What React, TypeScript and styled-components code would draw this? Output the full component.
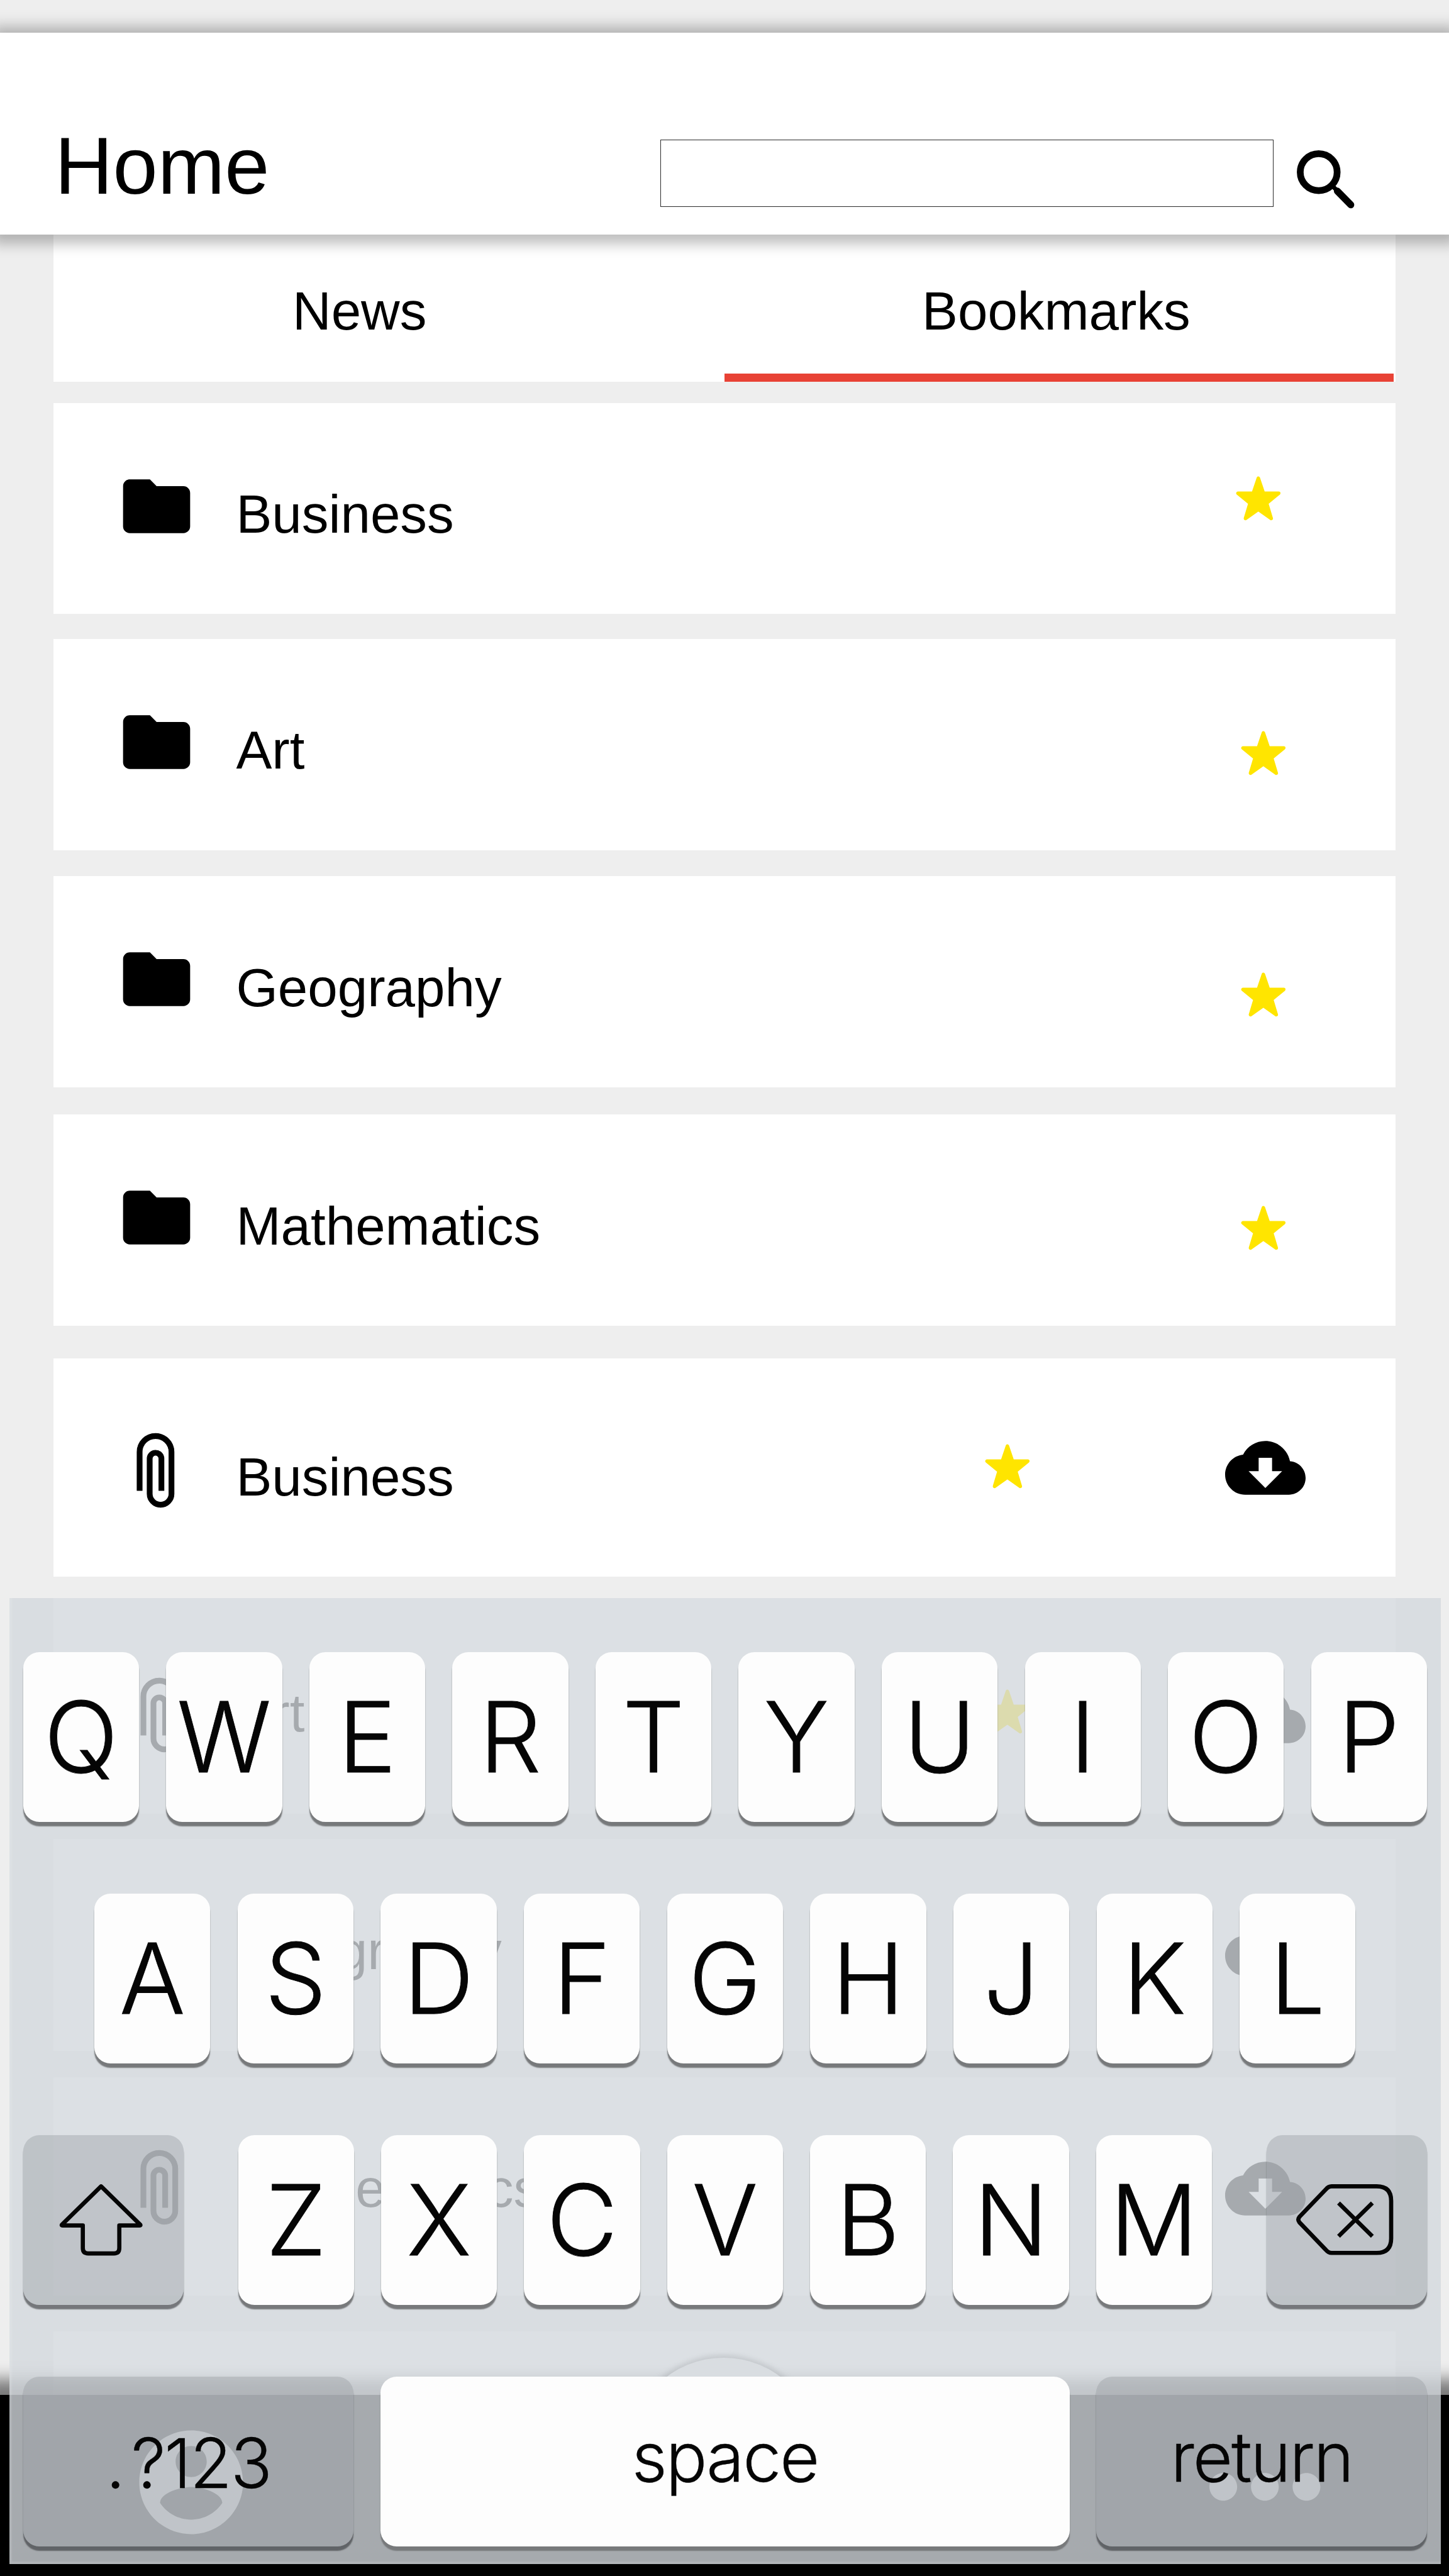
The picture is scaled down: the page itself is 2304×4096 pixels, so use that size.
import React from "react";
import styled, { createGlobalStyle } from "styled-components";

const u = (n: number) => `${Math.round((n * 2304 * 100) / 2700) / 100}px`;

const Global = createGlobalStyle`
  html, body { margin: 0; padding: 0; }
  body { background: #eee; overflow: hidden; font-family: "Liberation Sans", Arial, sans-serif; color: #000; }
`;

const Screen = styled.div`
  position: relative;
  width: ${u(2700)};
  height: ${u(4800)};
  overflow: hidden;
  background: #eee;
  display: flex;
  flex-direction: column;
`;

const Header = styled.header`
  flex: none;
  z-index: 1;
  box-sizing: border-box;
  height: ${u(376)};
  margin-top: ${u(61)};
  padding: ${u(199)} ${u(153)} 0 ${u(102)};
  display: flex;
  align-items: flex-start;
  background: #fff;
  box-shadow: 0 ${u(3)} ${u(24)} ${u(15)} rgba(0, 0, 0, 0.26);
`;

const Title = styled.h1`
  margin: ${u(-36)} auto 0 0;
  font-size: ${u(150)};
  line-height: ${u(172)};
  font-weight: 400;
`;

const SearchBox = styled.input`
  box-sizing: border-box;
  width: ${u(1143)};
  height: ${u(125.4)};
  padding: 0 ${u(20)};
  border: 1px solid #2b2b2b;
  border-radius: 0;
  background: #fff;
  outline: none;
  font: inherit;
`;

const Glyph = styled.svg<{ $size: number; $color?: string }>`
  display: block;
  flex: none;
  width: ${(p) => u(p.$size)};
  height: ${(p) => u(p.$size)};
  fill: ${(p) => p.$color ?? "#000"};
  overflow: visible;
`;

const SearchSlot = styled.div`
  margin: 0 0 0 ${u(24)};
`;

const Tabs = styled.nav`
  flex: none;
  display: grid;
  grid-template-columns: 1fr 1fr;
  height: ${u(274)};
  margin: 0 ${u(100)} ${u(40)};
  background: #fff;
`;

const Tab = styled.div<{ $active?: boolean; $inset: number }>`
  box-sizing: border-box;
  padding: ${u(86)} 0 0 ${(p) => u(p.$inset)};
  margin-right: ${(p) => (p.$active ? u(3) : 0)};
  font-size: ${u(100)};
  line-height: ${u(114)};
  border-bottom: ${u(16.4)} solid ${(p) => (p.$active ? "#e84235" : "transparent")};
`;

const List = styled.main`
  display: flex;
  flex-direction: column;
  margin: 0 ${u(100)};
`;

const Card = styled.article<{ $h: number; $gap: number }>`
  flex: none;
  box-sizing: border-box;
  display: flex;
  align-items: flex-start;
  height: ${(p) => u(p.$h)};
  margin-bottom: ${(p) => u(p.$gap)};
  background: #fff;
`;

const Slot = styled.div<{ $w: number; $left: number; $top: number }>`
  flex: none;
  width: ${(p) => u(p.$w)};
  padding-top: ${(p) => u(p.$top)};
  margin-left: ${(p) => u(p.$left)};
`;

const Label = styled.div<{ $top: number; $left: number }>`
  flex: 1;
  margin-left: ${(p) => u(p.$left)};
  padding-top: ${(p) => u(p.$top)};
  font-size: ${u(100)};
  line-height: ${u(114)};
`;

const NavBar = styled.footer`
  position: absolute;
  left: 0;
  right: 0;
  bottom: 0;
  height: ${u(338)};
  background: #000;
  box-shadow: 0 0 ${u(28)} ${u(29)} rgba(0, 0, 0, 0.49);
  display: flex;
  align-items: flex-start;
`;

const NavItem = styled.div<{ $left: number; $top: number }>`
  flex: none;
  margin: ${(p) => u(p.$top)} 0 0 ${(p) => u(p.$left)};
`;

const HomeButton = styled.div`
  width: ${u(350)};
  height: ${u(350)};
  border-radius: 50%;
  background: #eee;
  box-shadow: 0 0 ${u(10)} ${u(5)} rgba(0, 0, 0, 0.45);
`;

const Keyboard = styled.section`
  position: absolute;
  z-index: 2;
  box-sizing: border-box;
  left: ${u(18)};
  top: ${u(2978)};
  width: ${u(2667)};
  height: ${u(1800)};
  padding: ${u(100)} ${u(26)} 0 ${u(25)};
  display: flex;
  flex-direction: column;
  gap: ${u(134)};
  background: rgba(211, 216, 221, 0.79);
  box-shadow: inset 4px -4px 2px rgba(255, 255, 255, 0.12);
`;

const KeyRow = styled.div<{ $inset?: number }>`
  display: flex;
  justify-content: space-between;
  height: ${u(316)};
  padding: 0 ${(p) => u(p.$inset ?? 0)};
`;

const KeyGroup = styled.div`
  display: flex;
  gap: ${u(50.5)};
`;

const Key = styled.button<{ $w?: number; $dark?: boolean; $word?: number; $down?: number; $up?: number }>`
  flex: none;
  box-sizing: border-box;
  width: ${(p) => u(p.$w ?? 216)};
  height: ${u(316.5)};
  margin: 0;
  padding: ${(p) => u(p.$down ?? 0)} 0 ${(p) => u(p.$up ?? 0)};
  border: 0;
  border-radius: ${u(30)};
  display: flex;
  align-items: center;
  justify-content: center;
  background: ${(p) => (p.$dark ? "rgba(155, 160, 165, 0.43)" : "#fdfdfd")};
  box-shadow: 0 ${u(8)} ${u(2)} ${(p) => (p.$dark ? "rgba(50, 52, 55, 0.6)" : "#77797b")};
  color: #050505;
  font-family: Inter, Roboto, sans-serif;
  font-weight: 300;
  font-size: ${(p) => u(p.$word ?? 182)};
  line-height: 1;
  letter-spacing: ${(p) => (p.$word ? "-0.02em" : "0")};
  -webkit-text-stroke: ${(p) => (p.$word ? "0.4px" : "0.9px")} #050505;
`;

const Dot = styled.span`
  margin-right: ${u(14)};
`;

const LineIcon = styled.svg<{ $w: number; $h: number }>`
  display: block;
  margin-right: ${u(8)};
  width: ${(p) => u(p.$w)};
  height: ${(p) => u(p.$h)};
  fill: none;
  stroke: #050505;
  stroke-width: 7.8;
  stroke-linejoin: round;
  overflow: visible;
`;

const Folder = () => (
  <Glyph $size={150} viewBox="0 0 24 24">
    <path d="M10 4H4c-1.1 0-1.99.9-1.99 2L2 18c0 1.1.9 2 2 2h16c1.1 0 2-.9 2-2V8c0-1.1-.9-2-2-2h-8l-2-2z" />
  </Glyph>
);

const Clip = () => (
  <Glyph $size={150} viewBox="0 0 24 24">
    <path
      transform="rotate(180 12 12)"
      stroke="#000"
      strokeWidth="0.22"
      strokeLinejoin="round"
      d="M16.5 6v11.5c0 2.21-1.79 4-4 4s-4-1.79-4-4V5c0-1.38 1.12-2.5 2.5-2.5s2.5 1.12 2.5 2.5v10.5c0 .55-.45 1-1 1s-1-.45-1-1V6H10v9.5c0 1.38 1.12 2.5 2.5 2.5s2.5-1.12 2.5-2.5V5c0-2.21-1.79-4-4-4S7 2.79 7 5v12.5c0 3.04 2.46 5.5 5.5 5.5s5.5-2.46 5.5-5.5V6h-1.5z"
    />
  </Glyph>
);

const Star = () => (
  <Glyph $size={84} $color="#ffe500" viewBox="0 0 84 84">
    <path
      d="M42 4L51.5 32H80L57.5 50.5L66 79L42 62L18 79L26.5 50.5L4 32H32.5Z"
      stroke="#ffe500"
      strokeWidth="6.5"
      strokeLinejoin="round"
    />
  </Glyph>
);

const Cloud = () => (
  <Glyph $size={150} viewBox="0 0 24 24">
    <path d="M19.35 10.04C18.67 6.59 15.64 4 12 4 9.11 4 6.6 5.64 5.35 8.04 2.34 8.36 0 10.91 0 14c0 3.31 2.69 6 6 6h13c2.76 0 5-2.24 5-5 0-2.64-2.05-4.78-4.65-4.96zM17 13l-5 5-5-5h3V9h4v4h3z" />
  </Glyph>
);

type Entry = {
  name: string;
  h: number;
  gap: number;
  text: number;
  star: [number, number];
  clip?: [number, number];
  cloud?: number;
};

/* star and clip are [x, y] insets inside the card, cloud is a y inset */
const entries: Entry[] = [
  { name: "Business", h: 393, gap: 47, text: 241, star: [2203, 136] },
  { name: "Art", h: 393, gap: 49, text: 241, star: [2212, 171] },
  { name: "Geography", h: 393, gap: 51, text: 242, star: [2212, 179] },
  { name: "Mathematics", h: 393, gap: 61, text: 242, star: [2212, 169] },
  { name: "Business", h: 407, gap: 40, text: 255, star: [1735, 160], clip: [118.5, 134], cloud: 129 },
  { name: "Art", h: 402, gap: 47, text: 248, star: [1735, 170], clip: [125.5, 143], cloud: 145 },
  { name: "Geography", h: 395, gap: 49, text: 242, star: [1735, 160], clip: [125.5, 132], cloud: 130 },
  { name: "Mathematics", h: 407, gap: 66, text: 241, star: [1735, 160], clip: [125.5, 130], cloud: 132 },
  { name: "", h: 407, gap: 0, text: 242, star: [1735, 160] },
];

const Row = ({ e }: { e: Entry }) => {
  const left = e.clip ? e.clip[0] : 117;
  return (
    <Card $h={e.h} $gap={e.gap}>
      {e.name && (
        <>
          <Slot $w={150} $left={left} $top={e.clip ? e.clip[1] : 117}>
            {e.clip ? <Clip /> : <Folder />}
          </Slot>
          <Label $top={e.text - 91} $left={190 - left}>
            {e.name}
          </Label>
          <Slot $w={84} $left={0} $top={e.star[1]}>
            <Star />
          </Slot>
          {e.cloud ? (
            <>
              <Slot $w={150} $left={2183 - e.star[0] - 84} $top={e.cloud}>
                <Cloud />
              </Slot>
              <Slot $w={167} $left={0} $top={0} />
            </>
          ) : (
            <Slot $w={2500 - e.star[0] - 84} $left={0} $top={0} />
          )}
        </>
      )}
    </Card>
  );
};

const letters = (s: string) => s.split("").map((c) => <Key key={c}>{c}</Key>);

export default function App() {
  return (
    <Screen>
      <Global />
      <Header>
        <Title>Home</Title>
        <SearchBox aria-label="Search" />
        <SearchSlot>
          <Glyph $size={150} viewBox="0 0 150 150">
            <circle cx="60.7" cy="60.7" r="34.4" fill="none" stroke="#000" strokeWidth="12.6" />
            <path d="M85 85L94 94" fill="none" stroke="#000" strokeWidth="8" />
            <path d="M95.5 96L120.5 121.5" fill="none" stroke="#000" strokeWidth="13" strokeLinecap="round" />
          </Glyph>
        </SearchSlot>
      </Header>
      <Tabs>
        <Tab $inset={445}>News</Tab>
        <Tab $inset={368} $active>
          Bookmarks
        </Tab>
      </Tabs>
      <List>
        {entries.map((e, i) => (
          <Row key={i} e={e} />
        ))}
      </List>
      <NavBar>
        <NavItem $left={240} $top={47}>
          <Glyph $size={232} $color="#fff" viewBox="0 0 24 24">
            <path d="M12 2C6.48 2 2 6.48 2 12s4.48 10 10 10 10-4.48 10-10S17.52 2 12 2zm0 3c1.66 0 3 1.34 3 3s-1.34 3-3 3-3-1.34-3-3 1.34-3 3-3zm0 14.2c-2.5 0-4.71-1.28-6-3.22.03-1.99 4-3.08 6-3.08 1.99 0 5.97 1.09 6 3.08-1.29 1.94-3.5 3.22-6 3.22z" />
          </Glyph>
        </NavItem>
        <NavItem $left={701} $top={-69}>
          <HomeButton />
        </NavItem>
        <NavItem $left={679} $top={17}>
          <Glyph $size={310} $color="#fff" viewBox="0 0 24 24">
            <path d="M6 10c-1.1 0-2 .9-2 2s.9 2 2 2 2-.9 2-2-.9-2-2-2zm12 0c-1.1 0-2 .9-2 2s.9 2 2 2 2-.9 2-2-.9-2-2-2zm-6 0c-1.1 0-2 .9-2 2s.9 2 2 2 2-.9 2-2-.9-2-2-2z" />
          </Glyph>
        </NavItem>
      </NavBar>
      <Keyboard>
        <KeyRow>{letters("QWERTYUIOP")}</KeyRow>
        <KeyRow $inset={133}>{letters("ASDFGHJKL")}</KeyRow>
        <KeyRow>
          <Key $w={299} $dark aria-label="Shift">
            <LineIcon $w={154} $h={132} viewBox="0 0 154 132">
              <path d="M77 4L150 75.5Q151 77 149 77H111V119Q111 129 101 129H53Q43 129 43 119V77H5Q3 77 4 75.5Z" />
            </LineIcon>
          </Key>
          <KeyGroup>{letters("ZXCVBNM")}</KeyGroup>
          <Key $w={299} $dark aria-label="Delete">
            <LineIcon $w={181} $h={132} viewBox="0 0 181 132">
              <path d="M66 4H150Q177 4 177 31V101Q177 128 150 128H66Q60 128 55 122L6 71Q2 66 6 61L55 10Q60 4 66 4Z" />
              <path d="M79 35L142 97M142 35L79 97" />
            </LineIcon>
          </Key>
        </KeyRow>
        <KeyRow>
          <Key $w={616} $dark $word={128} $down={8}>
            <Dot>.</Dot>?123
          </Key>
          <Key $w={1284} $word={128} $up={17}>
            space
          </Key>
          <Key $w={616} $dark $word={128} $up={17}>
            return
          </Key>
        </KeyRow>
      </Keyboard>
    </Screen>
  );
}
